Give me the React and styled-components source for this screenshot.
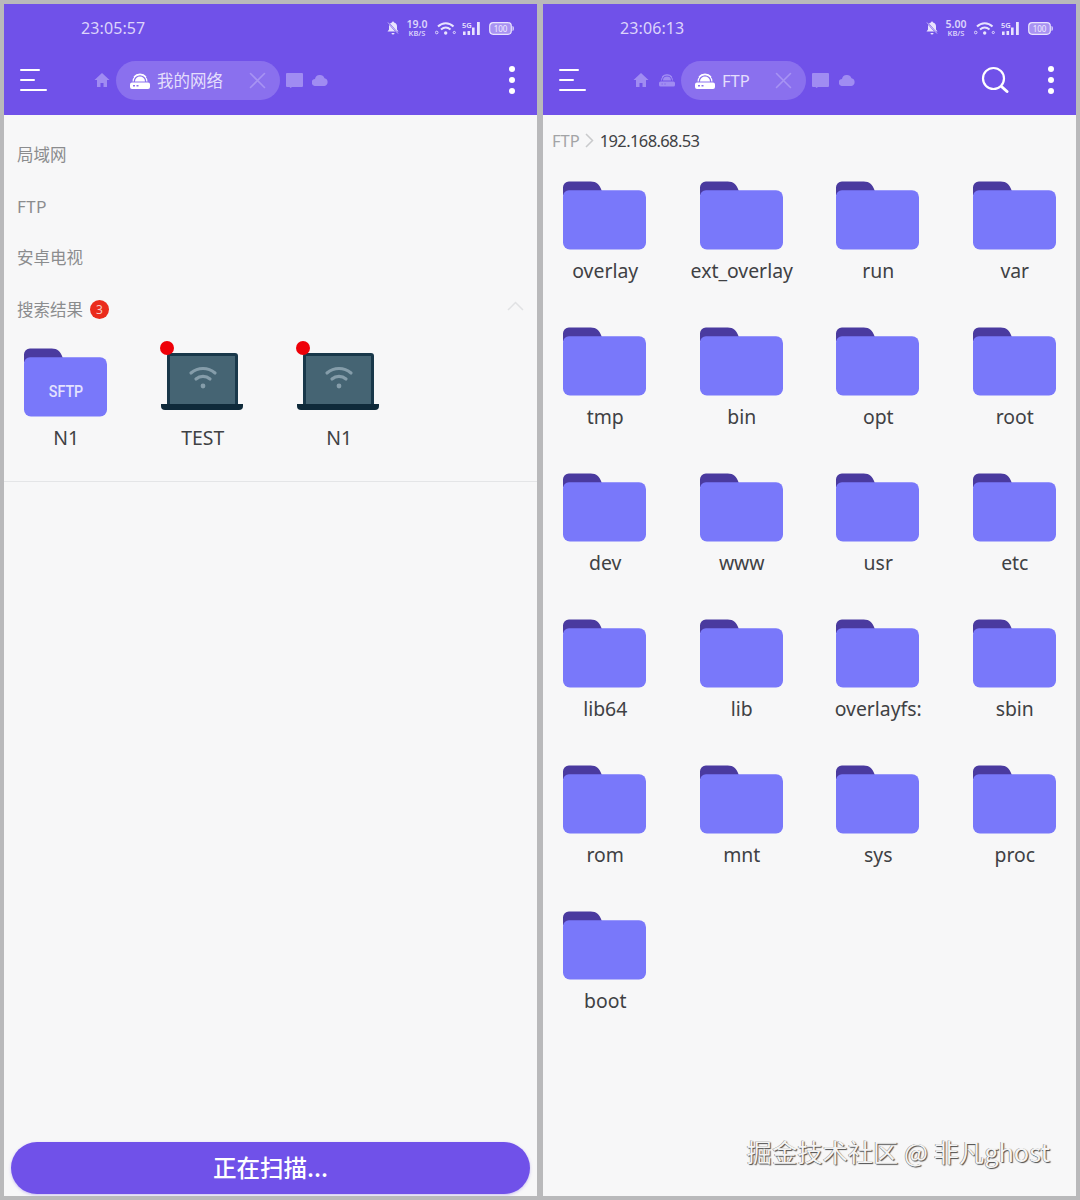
import styled, { createGlobalStyle } from "styled-components";

const Global = createGlobalStyle`
  html, body { margin: 0; background: #b9b9bb; }
  body { font-family: "Noto Sans", "Noto Sans CJK SC", sans-serif; }
`;

const Page = styled.div`
  width: 1080px;
  height: 1200px;
  box-sizing: border-box;
  padding: 4px;
  display: flex;
  gap: 6px;
`;
const Phone = styled.section`
  width: 533px;
  height: 1192px;
  position: relative;
  display: flex;
  flex-direction: column;
  background: #f7f7f8;
  overflow: hidden;
`;
const Header = styled.header`
  height: 111px;
  flex: none;
  background: #7051e9;
  display: flex;
  flex-direction: column;
`;
const StatusBar = styled.div`
  height: 48px;
  padding: 0 23px 0 77px;
  display: flex;
  align-items: center;
  color: #dcd4fb;
`;
const Time = styled.span`
  font: 16px "Noto Sans", sans-serif;
  letter-spacing: 0.1px;
  flex: 1;
`;
const StatusIcons = styled.div`
  display: flex;
  align-items: center;
`;
const StatusGap = styled.span`
  width: ${(p) => p.$w}px;
`;
const Speed = styled.div`
  width: 22px;
  height: 18px;
  margin: 0 7px;
  display: flex;
  flex-direction: column;
  align-items: center;
  font: 600 10.5px/10px "Noto Sans", sans-serif;
`;
const SpeedUnit = styled.span`
  font-size: 7.5px;
  line-height: 8px;
`;
const Toolbar = styled.div`
  height: 63px;
  padding-bottom: 7px;
  box-sizing: border-box;
  display: flex;
  align-items: center;
`;
const Menu = styled.div`
  width: 27px;
  margin: 0 47px 0 16px;
  height: 22px;
  display: flex;
  flex-direction: column;
  justify-content: space-between;
  flex: none;
`;
const MenuLine = styled.i`
  display: block;
  height: 2px;
  width: ${(p) => p.$w}px;
  background: #fff;
  border-radius: 1px;
`;
const Crumb = styled.span`
  display: flex;
  margin-right: ${(p) => p.$gap}px;
  flex: none;
`;
const Tab = styled.div`
  width: ${(p) => p.$w}px;
  height: 39px;
  margin-right: 6px;
  padding: 0 14px;
  box-sizing: border-box;
  border-radius: 20px;
  background: #8a70ee;
  display: flex;
  align-items: center;
  gap: 6px;
  flex: none;
  color: #e4defc;
  font: 16.5px "Noto Sans", "Noto Sans CJK SC", sans-serif;
`;
const TabLabel = styled.span`
  margin-left: 1px;
`;
const TabClose = styled.span`
  margin-left: auto;
  display: flex;
`;
const ToolSpacer = styled.div`
  flex: 1;
`;
const SearchBtn = styled.span`
  display: flex;
  margin-right: 39px;
`;
const More = styled.div`
  width: 6px;
  height: 28px;
  margin-right: 22px;
  display: flex;
  flex-direction: column;
  justify-content: space-between;
  flex: none;
`;
const Dot = styled.i`
  display: block;
  width: 6px;
  height: 6px;
  border-radius: 50%;
  background: #fff;
`;

const NetList = styled.div`
  padding-top: 13px;
  display: flex;
  flex-direction: column;
`;
const NetRow = styled.div`
  height: 51.8px;
  padding: 0 13px;
  display: flex;
  align-items: center;
  gap: 7px;
  color: #8b8c8e;
  font: 16.5px "Noto Sans CJK SC", sans-serif;
`;
const Badge = styled.span`
  width: 19px;
  height: 19px;
  border-radius: 50%;
  background: #ea2b1c;
  color: #f7c9c3;
  display: flex;
  align-items: center;
  justify-content: center;
  font: 12px "Noto Sans", sans-serif;
`;
const Collapse = styled.span`
  margin-left: auto;
  margin-top: -6px;
  display: flex;
`;
const IconGrid = styled.div`
  display: grid;
  grid-template-columns: repeat(4, 136.5px);
  grid-auto-rows: ${(p) => p.$row}px;
  margin: ${(p) => p.$top}px 0 0 -6px;
`;
const Item = styled.div`
  display: flex;
  flex-direction: column;
  align-items: center;
  color: #3f4144;
  font: 19.4px/24px "Noto Sans", sans-serif;
`;
const IconBox = styled.div`
  position: relative;
  width: 84px;
  height: 70px;
  margin-bottom: 8px;
`;
const FolderTag = styled.span`
  position: absolute;
  left: 0;
  right: 0;
  top: 33px;
  text-align: center;
  color: #e3e2fe;
  font: 500 17px/20px Roboto, sans-serif;
  transform: scaleX(0.84);
`;
const RedDot = styled.span`
  position: absolute;
  left: -1px;
  top: -7px;
  width: 14px;
  height: 14px;
  border-radius: 50%;
  background: #ee0008;
`;
const Divider = styled.div`
  height: 1px;
  background: #e4e5e7;
`;
const Grow = styled.div`
  flex: 1;
`;
const ScanButton = styled.button`
  height: 52px;
  margin: 0 7px 2px;
  padding: 0 0 2px;
  border: 0;
  border-radius: 26px;
  background: #7051e9;
  color: #fff;
  font: 500 23.5px "Noto Sans CJK SC", sans-serif;
  box-shadow: 0 1px 3px rgba(112, 81, 233, 0.35);
`;
const Breadcrumb = styled.div`
  height: 52px;
  padding: 0 9px 2px;
  box-sizing: border-box;
  margin-bottom: 14px;
  display: flex;
  align-items: center;
  gap: 5px;
  font: 16.5px "Noto Sans", sans-serif;
  color: #3f4144;
`;
const BreadRoot = styled.span`
  color: #a3a4a6;
`;
const BreadPath = styled.span`
  margin-left: 1px;
  letter-spacing: -0.62px;
`;
const Watermark = styled.div`
  position: absolute;
  right: 26px;
  bottom: 29px;
  color: #f4f4f4;
  font: 25.3px/32px "Noto Sans CJK SC", sans-serif;
  text-shadow: 1px 1px 1px #4a4a4a, -0.5px -0.5px 0.5px #777;
`;

const Folder = () => (
  <svg width="83" height="70" viewBox="0 0 84 70">
    <path d="M0 20V6a6 6 0 0 1 6-6h22c6 0 9 3 11 9l2 5H0z" fill="#4a3a9f" />
    <path d="M0 15a6 6 0 0 1 6-6h71a7 7 0 0 1 7 7v46a7 7 0 0 1-7 7H7a7 7 0 0 1-7-7z" fill="#7978fa" />
  </svg>
);

const Laptop = () => (
  <svg width="83" height="70" viewBox="0 0 83 70">
    <path d="M6 8a3 3 0 0 1 3-3h65a3 3 0 0 1 3 3v50H6z" fill="#19384a" />
    <rect x="9" y="8" width="65" height="48" fill="#456473" />
    <path d="M0 56h82v2a4 4 0 0 1-4 4H4a4 4 0 0 1-4-4z" fill="#0f2a3a" />
    <g fill="none" stroke="#859daa" strokeWidth="3.2" strokeLinecap="round">
      <path d="M30 25c7-6 17-6 24 0" />
      <path d="M35 31c4-3.500 10-3.500 14 0" />
    </g>
    <circle cx="42" cy="38" r="2.400" fill="#859daa" />
  </svg>
);

const Home = () => (
  <svg width="16" height="16" viewBox="0 0 16 16" fill="#a08cf2">
    <path d="M8 1 0.5 8H3v7h3.5v-4h3v4H13V8h2.500z" />
  </svg>
);
const Router = ({ size = 20, color = "#fff" }) => (
  <svg width={size} height={size * 0.85} viewBox="0 0 20 17" fill={color}>
    <path d="M2 10.500h16a2 2 0 0 1 2 2V15a2 2 0 0 1-2 2H2a2 2 0 0 1-2-2v-2.500a2 2 0 0 1 2-2z" />
    <path d="M5 9.500a5 5 0 0 1 10 0z" />
    <path d="M2.500 9.500a7.500 7.500 0 0 1 15 0h-1.200a6.300 6.300 0 0 0-12.600 0z" />
    <path d="M3.500 4.500a8.500 8.500 0 0 1 13 0l-.8.800a7.500 7.500 0 0 0-11.400 0z" />
    <rect x="3" y="13" width="2" height="1.500" fill="#8a70ee" />
    <rect x="6.500" y="13" width="2" height="1.500" fill="#8a70ee" />
  </svg>
);
const Close = () => (
  <svg width="17" height="17" viewBox="0 0 17 17" stroke="#a793f3" strokeWidth="1.6" strokeLinecap="round">
    <path d="M1.500 1.500l14 14M15.500 1.500l-14 14" />
  </svg>
);
const SdCard = () => (
  <svg width="17" height="15" viewBox="0 0 17 15" fill="#a08cf2">
    <path d="M1 0h15a1 1 0 0 1 1 1v12a1 1 0 0 1-1 1H6l-1.500 1-1-1H1a1 1 0 0 1-1-1V1a1 1 0 0 1 1-1z" />
  </svg>
);
const Cloud = () => (
  <svg width="16" height="12" viewBox="0 0 16 12" fill="#a08cf2">
    <path d="M3.500 12a3.500 3.500 0 0 1-.5-7A5 5 0 0 1 12.500 4.200 4 4 0 0 1 12.500 12z" />
  </svg>
);
const Search = () => (
  <svg width="28" height="28" viewBox="0 0 28 28" fill="none" stroke="#fff" strokeLinecap="round">
    <circle cx="12.500" cy="12.500" r="10.500" strokeWidth="2.200" />
    <path d="M21 21l5 4.500" strokeWidth="3" />
  </svg>
);
const BellOff = () => (
  <svg width="12" height="14" viewBox="0 0 12 14" fill="#e9e4fd">
    <path d="M6 0.500a1 1 0 0 1 1 1c2 .5 3 2 3 4v3l1.500 2h-11L2 8.500v-3c0-2 1-3.500 3-4a1 1 0 0 1 1-1z" />
    <path d="M4.500 12h3a1.500 1.500 0 0 1-3 0z" />
    <path d="M1 1.500l10 11" stroke="#7051e9" strokeWidth="1.500" />
    <path d="M1 1.500l10 11" stroke="#e9e4fd" strokeWidth=".7" />
  </svg>
);
const Wifi = () => (
  <svg width="21" height="15" viewBox="0 0 21 15" fill="none" stroke="#e9e4fd">
    <path d="M3 5.500c4.500-4.500 11-4.500 15.500 0" strokeWidth="2" />
    <path d="M6 8.500c3-2.600 6.500-2.600 9.500 0" strokeWidth="2" />
    <circle cx="10.700" cy="12" r="1.700" fill="#e9e4fd" stroke="none" />
    <circle cx="1.700" cy="11.500" r="1.300" strokeWidth=".9" />
    <circle cx="19.300" cy="11.500" r="1.100" strokeWidth=".9" />
  </svg>
);
const Signal = () => (
  <svg width="20" height="15" viewBox="0 0 20 15" fill="#e9e4fd">
    <text x="0" y="6.500" fontSize="7.500" fontFamily="Noto Sans" fontWeight="600">5G</text>
    <rect x="1" y="10.500" width="2.600" height="3.500" />
    <rect x="5.500" y="10" width="2.600" height="4" />
    <rect x="10" y="6.500" width="2.600" height="7.500" />
    <rect x="15" y="1" width="2.800" height="13" />
  </svg>
);
const Battery = () => (
  <svg width="25" height="13" viewBox="0 0 25 13">
    <rect x=".7" y=".7" width="21.600" height="11.600" rx="3.500" fill="#a892f2" stroke="#e9e4fd" strokeWidth="1.200" />
    <path d="M23.500 4c1 .3 1.300 1 1.300 2.500s-.3 2.200-1.300 2.500z" fill="#e9e4fd" />
    <text x="11.500" y="9.500" fontSize="8" textAnchor="middle" fill="#f0ecfe" fontFamily="Noto Sans">100</text>
  </svg>
);
const ChevronRight = () => (
  <svg width="9" height="15" viewBox="0 0 9 15" fill="none" stroke="#c9cacc" strokeWidth="1.500">
    <path d="M1 1l6.500 6.500L1 14" />
  </svg>
);
const ChevronUp = () => (
  <svg width="17" height="10" viewBox="0 0 17 10" fill="none" stroke="#e1e2e4" strokeWidth="1.500">
    <path d="M1 9l7.500-7.500L16 9" />
  </svg>
);

const Status = ({ time, speed }) => (
  <StatusBar>
    <Time>{time}</Time>
    <StatusIcons>
      <BellOff />
      <Speed>
        {speed}
        <SpeedUnit>KB/S</SpeedUnit>
      </Speed>
      <Wifi />
      <StatusGap $w={6} />
      <Signal />
      <StatusGap $w={7} />
      <Battery />
    </StatusIcons>
  </StatusBar>
);

const Hamburger = () => (
  <Menu>
    <MenuLine $w={20} />
    <MenuLine $w={15} />
    <MenuLine $w={27} />
  </Menu>
);

const MoreDots = () => (
  <More>
    <Dot />
    <Dot />
    <Dot />
  </More>
);

const folders = [
  "overlay", "ext_overlay", "run", "var",
  "tmp", "bin", "opt", "root",
  "dev", "www", "usr", "etc",
  "lib64", "lib", "overlayfs:", "sbin",
  "rom", "mnt", "sys", "proc",
  "boot",
];

const App = () => {
  return (
    <Page>
      <Global />
      <Phone>
        <Header>
          <Status time="23:05:57" speed="19.0" />
          <Toolbar>
            <Hamburger />
            <Crumb $gap={6}><Home /></Crumb>
            <Tab $w={164}>
              <Router />
              <TabLabel>我的网络</TabLabel>
              <TabClose><Close /></TabClose>
            </Tab>
            <Crumb $gap={9}><SdCard /></Crumb>
            <Crumb $gap={0}><Cloud /></Crumb>
            <ToolSpacer />
            <MoreDots />
          </Toolbar>
        </Header>
        <NetList>
          <NetRow>局域网</NetRow>
          <NetRow>FTP</NetRow>
          <NetRow>安卓电视</NetRow>
          <NetRow>
            搜索结果
            <Badge>3</Badge>
            <Collapse><ChevronUp /></Collapse>
          </NetRow>
        </NetList>
        <IconGrid $top={13.2} $row={132.6}>
          <Item>
            <IconBox>
              <Folder />
              <FolderTag>SFTP</FolderTag>
            </IconBox>
            N1
          </Item>
          <Item>
            <IconBox>
              <Laptop />
              <RedDot />
            </IconBox>
            TEST
          </Item>
          <Item>
            <IconBox>
              <Laptop />
              <RedDot />
            </IconBox>
            N1
          </Item>
        </IconGrid>
        <Divider />
        <Grow />
        <ScanButton>正在扫描...</ScanButton>
      </Phone>
      <Phone>
        <Header>
          <Status time="23:06:13" speed="5.00" />
          <Toolbar>
            <Hamburger />
            <Crumb $gap={10}><Home /></Crumb>
            <Crumb $gap={6}><Router size={16} color="#a08cf2" /></Crumb>
            <Tab $w={125}>
              <Router />
              <TabLabel>FTP</TabLabel>
              <TabClose><Close /></TabClose>
            </Tab>
            <Crumb $gap={10}><SdCard /></Crumb>
            <Crumb $gap={0}><Cloud /></Crumb>
            <ToolSpacer />
            <SearchBtn><Search /></SearchBtn>
            <MoreDots />
          </Toolbar>
        </Header>
        <Breadcrumb>
          <BreadRoot>FTP</BreadRoot>
          <ChevronRight />
          <BreadPath>192.168.68.53</BreadPath>
        </Breadcrumb>
        <IconGrid $top={0} $row={146}>
          {folders.map((name) => (
            <Item key={name}>
              <IconBox><Folder /></IconBox>
              {name}
            </Item>
          ))}
        </IconGrid>
        <Watermark>掘金技术社区 @ 非凡ghost</Watermark>
      </Phone>
    </Page>
  );
};

export default App;
